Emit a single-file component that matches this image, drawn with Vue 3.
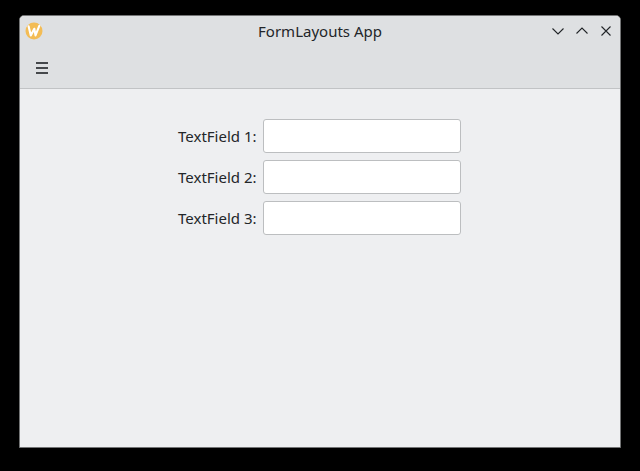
<script setup>
const fields = ['TextField 1:', 'TextField 2:', 'TextField 3:']
</script>

<template>
  <div class="desktop">
    <main class="window">
      <header class="header">
        <div class="titlebar">
          <svg class="logo" width="18" height="18" viewBox="0 0 18 18">
            <circle cx="9" cy="9" r="8.5" fill="#f3bc55" />
            <path d="M3.6 4.300 5.800 13.400 9.300 6.800 10.500 13.400 14.300 3.800" fill="none" stroke="#fff" stroke-width="2.1" stroke-linecap="round" stroke-linejoin="round" />
          </svg>
          <h1 class="title">FormLayouts App</h1>
          <div class="controls">
            <svg width="12" height="12" viewBox="0 0 12 12"><path d="M.5 3.500 6 9l5.500-5.500" /></svg>
            <svg width="12" height="12" viewBox="0 0 12 12"><path d="M.5 8.500 6 3l5.500 5.500" /></svg>
            <svg width="12" height="12" viewBox="0 0 12 12"><path d="M1.500 1.500l9 9M10.500 1.500l-9 9" /></svg>
          </div>
        </div>
        <div class="toolbar">
          <button class="menu" aria-label="Menu">
            <svg width="12" height="12" viewBox="0 0 12 12"><path d="M0 0h12v2H0zM0 5h12v2H0zM0 10h12v2H0z" fill="#45484b" /></svg>
          </button>
        </div>
      </header>
      <form class="form">
        <label v-for="field in fields" :key="field" class="row">
          <span class="label">{{ field }}</span>
          <input class="input" type="text" />
        </label>
      </form>
    </main>
  </div>
</template>

<style>
body {
  background: #000;
}
</style>

<style scoped>
.desktop {
  box-sizing: border-box;
  height: 471px;
  padding: 15px 19px 23px;
  background: #000;
  color: #232629;
  font-family: "Noto Sans", sans-serif;
  font-size: 15px;
  overflow: hidden;
}
.window {
  box-sizing: border-box;
  width: 602px;
  height: 433px;
  border: 1px solid #737475;
  border-radius: 5px 5px 0 0;
  background: #eeeff1;
  overflow: hidden;
}
.header {
  background: #dee0e2;
  border-bottom: 1px solid #c1c3c5;
}
.titlebar {
  display: grid;
  grid-template-columns: 1fr auto 1fr;
  align-items: center;
  height: 30px;
  padding: 0 8px 2px 5px;
}
.logo {
  display: block;
}
.title {
  margin: 0;
  padding-left: 3px;
  font-size: inherit;
  font-weight: 400;
  line-height: 30px;
}
.controls {
  display: flex;
  justify-content: flex-end;
  gap: 12px;
}
.controls svg {
  fill: none;
  stroke: #232629;
  stroke-width: 1.1;
}
.toolbar {
  display: flex;
  align-items: center;
  height: 40px;
  padding-left: 16px;
}
.menu {
  display: flex;
  padding: 0;
  border: 0;
  background: none;
}
.form {
  display: flex;
  flex-direction: column;
  gap: 7px;
  padding: 30px 159px 0 158px;
}
.row {
  display: flex;
  justify-content: space-between;
  align-items: center;
  height: 34px;
}
.label {
  line-height: 34px;
  white-space: nowrap;
}
.input {
  box-sizing: border-box;
  width: 198px;
  height: 34px;
  margin: 0;
  padding: 0 8px;
  border: 1px solid #bcbec0;
  border-radius: 3px;
  background: #fff;
  font: inherit;
  outline: none;
}
</style>
